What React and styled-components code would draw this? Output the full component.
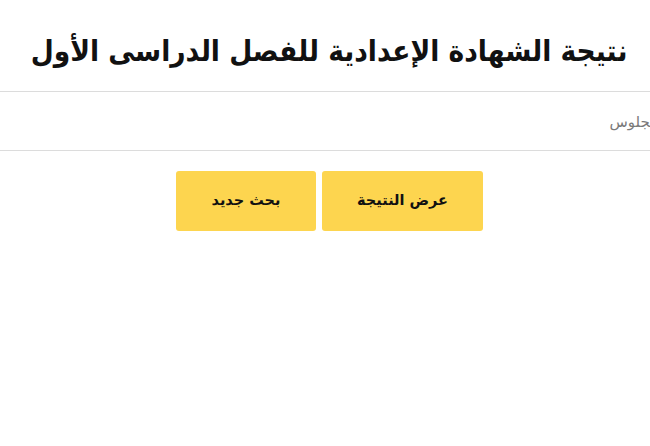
import React from "react";
import styled, { createGlobalStyle } from "styled-components";

const GlobalStyle = createGlobalStyle`
    html, body {
        margin: 0;
        padding: 0;
        background: #ffffff;
        overflow: hidden;
    }
    body {
        font-family: "DejaVu Sans", "Noto Sans", sans-serif;
        direction: rtl;
    }
`;

const Page = styled.div`
    width: 650px;
    display: flex;
    flex-direction: column;
    align-items: center;
`;

const Header = styled.header`
    align-self: stretch;
    height: 91px;
    display: flex;
    justify-content: center;
    align-items: flex-start;
    padding-top: 31px;
    box-sizing: border-box;
`;

const Title = styled.h1`
    margin: 0 0 0 8px;
    font-family: "DejaVu Sans Condensed", "DejaVu Sans", sans-serif;
    font-size: 29.5px;
    font-weight: bold;
    line-height: 40px;
    color: #111111;
    text-align: center;
    white-space: nowrap;
`;

const SeatRow = styled.div`
    align-self: stretch;
    height: 60px;
    border-top: 1px solid #dcdcdc;
    border-bottom: 1px solid #dcdcdc;
    box-sizing: border-box;
    overflow: hidden;
    display: flex;
`;

const SeatInput = styled.input`
    flex: 1;
    margin-right: -38px;
    border: none;
    outline: none;
    background: transparent;
    font-family: inherit;
    font-size: 15px;
    color: #222;
    padding: 2px 0 0;
    direction: rtl;
    &::placeholder {
        color: #7a7a7a;
    }
`;

const Actions = styled.div`
    display: flex;
    gap: 6px;
    margin-top: 20px;
    margin-left: 9px;
`;

const Button = styled.button`
    width: ${(props) => props.w}px;
    height: 60px;
    border: none;
    border-radius: 3px;
    background-color: #fdd54f;
    color: #111111;
    font-family: inherit;
    font-size: 14.5px;
    font-weight: bold;
    cursor: pointer;
    padding: 0 0 2px;
`;

export default function App() {
    return (
        <>
            <GlobalStyle />
            <Page>
                <Header>
                    <Title>نتيجة الشهادة الإعدادية للفصل الدراسى الأول</Title>
                </Header>
                <SeatRow>
                    <SeatInput type="text" placeholder="رقم الجلوس" />
                </SeatRow>
                <Actions>
                    <Button w={161}>عرض النتيجة</Button>
                    <Button w={140}>بحث جديد</Button>
                </Actions>
            </Page>
        </>
    );
}
